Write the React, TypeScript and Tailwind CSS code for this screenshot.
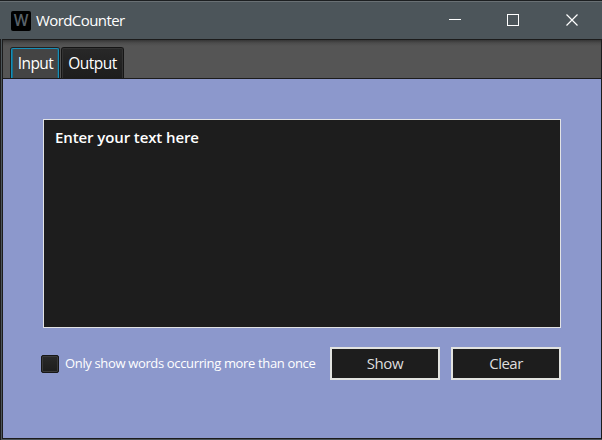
import React from "react";

function TitleBar() {
  return (
    <header className="flex h-[39px] shrink-0 items-center border-t border-[#1c1f21] bg-[#4c555a]">
      <div className="flex h-full w-full items-center border-t border-[#697074] pl-[11px]">
        <div className="mt-px flex h-5 w-5 items-center justify-center rounded-[2px] bg-black text-[15.5px] leading-none font-semibold text-[#596269]">
          <span>W</span>
        </div>
        <h1 className="ml-[5px] -mt-px text-[15px] leading-5 tracking-[-0.58px] text-white">WordCounter</h1>
        <div className="ml-auto flex h-full items-center">
          <svg width="160" height="37" viewBox="0 0 160 37" fill="none" stroke="#fff" shapeRendering="crispEdges">
            <path d="M7 17.5h12" />
            <rect x="65.5" y="12.5" width="11" height="11" />
            <path d="M124.5 12.5l11 11M135.5 12.5l-11 11" strokeWidth="1.2" shapeRendering="auto" />
          </svg>
        </div>
      </div>
    </header>
  );
}

function Tabs() {
  return (
    <nav className="flex h-10 shrink-0 items-end gap-px border-y border-[#1c1c1c] bg-[linear-gradient(#363636,#4c4c4c_3px,#555_6px,#555)] pl-[7px] text-[15.5px] text-white">
      <button className="flex h-[31px] w-[50px] rounded-t-[3px] border border-b-0 border-[#202020] bg-[#444]">
        <span className="flex h-[30px] w-[48px] items-center justify-center rounded-t-[2px] border border-b-0 border-[#168fb8] pt-px pl-px tracking-[-0.55px] shadow-[inset_1px_0_0_#166f8e,inset_-1px_0_0_#2c5563]">Input</span>
      </button>
      <button className="flex h-[31px] w-[63px] rounded-t-[3px] border border-b-0 border-[#151515] bg-gradient-to-b from-[#282828] to-[#1d1d1d]">
        <span className="flex h-[30px] w-[61px] items-center justify-center rounded-t-[2px] border border-b-0 border-[#333] pt-px tracking-[-0.55px]">Output</span>
      </button>
    </nav>
  );
}

export default function App() {
  return (
    <div className="flex h-[440px] w-[602px] flex-col overflow-hidden bg-[#4c555a] font-['Open_Sans','Noto_Sans',sans-serif]">
      <TitleBar />
      <div className="flex h-[401px] border-l border-[#1c1c1c] pb-px pl-px">
        <main className="flex w-[600px] flex-col border-x border-b border-[#1c1c1c]">
          <Tabs />
          <section className="flex flex-1 flex-col bg-[#8c98cc] pt-10 pr-10 pl-[38px]">
            <textarea
              readOnly
              value="Enter your text here"
              className="ml-[2px] block h-[209px] w-[518px] shrink-0 resize-none border border-[#e2e3e5] bg-[#1d1d1d] px-[11px] py-[7px] text-[15px] leading-5 font-semibold tracking-[-0.1px] text-white outline-none"
            />
            <div className="mt-[19px] flex h-[33px] items-center">
              <div className="flex h-[18px] w-[18px] rounded-[2px] border border-[#171717] bg-[#171717]">
                <div className="flex-1 rounded-[1px] border border-[#3a3a3a] bg-gradient-to-b from-[#292929] to-[#1e1e1e]" />
              </div>
              <label className="ml-[6px] w-[265px] pb-[2px] text-[13px] leading-5 tracking-[-0.35px] whitespace-nowrap text-white">Only show words occurring more than once</label>
              <button className="h-[33px] w-[110px] shrink-0 border-2 border-[#e2e3e0] bg-[#1d1d1d] pb-px text-[15px] leading-5 tracking-[-0.4px] text-[#ddd]">Show</button>
              <button className="ml-[11px] h-[33px] w-[110px] shrink-0 border-2 border-[#e2e3e0] bg-[#1d1d1d] pb-px text-[15px] leading-5 tracking-[-0.5px] text-[#ddd]">Clear</button>
            </div>
          </section>
        </main>
      </div>
    </div>
  );
}
